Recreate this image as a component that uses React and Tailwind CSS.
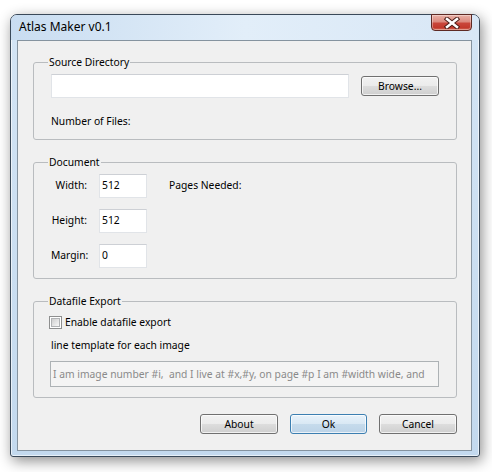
import React from "react";

function WinButton({ children, primary, width }) {
  return (
    <button
      className={
        primary
          ? "h-[20px] rounded-[3px] border border-[#3c7fb1] bg-[linear-gradient(#e8f2fa_0%,#d9e8f4_50%,#c6dbec_50%,#bcd3e7_100%)] shadow-[inset_0_0_0_1px_rgba(255,255,255,0.7)] leading-[16px] text-black"
          : "h-[20px] rounded-[3px] border border-[#707070] bg-[linear-gradient(#f2f2f2_0%,#ebebeb_50%,#dddddd_50%,#cfcfcf_100%)] shadow-[inset_0_0_0_1px_rgba(255,255,255,0.7)] leading-[16px] text-black"
      }
      style={{ width }}
    >
      {children}
    </button>
  );
}

function NumBox({ value }) {
  return (
    <div className="ml-[12px] w-[48px] h-[24px] bg-white border border-[#e1e4e8] border-t-[#cdd0d5] pl-[2px] pt-[2px] leading-[16px]">
      {value}
    </div>
  );
}

function Group({ title, children }) {
  return (
    <fieldset className="border border-[#b9bcbf] rounded-[3px]">
      <legend className="ml-[14px] px-[1px] leading-[15px]">{title}</legend>
      {children}
    </fieldset>
  );
}

export default function App() {
  return (
    <div className="w-[492px] h-[472px] bg-white pl-[10px] pt-[14px] font-['Noto_Sans',sans-serif] text-[10.3px] text-black">
      <div className="w-[470px] h-[443px] rounded-t-[7px] rounded-b-[3px] border border-[#3a4959] bg-gradient-to-b from-[#d4e5f5] to-[#c3d9ee] shadow-[2px_4px_14px_rgba(0,0,0,0.45),inset_0_0_0_1px_rgba(255,255,255,0.6)] flex flex-col">
        <div className="h-[25px] flex items-start rounded-t-[6px] bg-gradient-to-r from-[#c9ddf1] via-[#e2eef9] to-[#d8e7f6]">
          <span className="pl-[8px] pt-[4px] leading-[16px] text-[12px]">Atlas Maker v0.1</span>
          <button className="ml-auto mr-[7px] -mt-[1px] w-[41px] h-[17px] rounded-b-[4px] border border-[#5e2a24] bg-[linear-gradient(#e9b1a7_0%,#dc8a7e_45%,#c9463a_55%,#c2392c_85%,#d9735f_100%)] shadow-[inset_0_0_0_1px_rgba(255,255,255,0.35)] flex items-center justify-center">
            <svg width="16" height="12" viewBox="0 0 16 12">
              <path d="M3 2 L13 10 M13 2 L3 10" stroke="#4b1d17" strokeWidth="4.5" strokeLinecap="square" fill="none" />
              <path d="M3 2 L13 10 M13 2 L3 10" stroke="#ffffff" strokeWidth="2.5" strokeLinecap="square" fill="none" />
            </svg>
          </button>
        </div>

        <div className="ml-[6px] w-[455px] h-[411px] border border-[#85939f] bg-[#f0f0f0] pl-[15px] pr-[14px] pt-[14px]">
          <Group title="Source Directory">
            <div className="pl-[17px] pt-[4px] pb-[10px]">
              <div className="flex items-center">
                <div className="w-[298px] h-[24px] bg-white border border-[#e1e4e8] border-t-[#cdd0d5]" />
                <div className="ml-[12px]">
                  <WinButton width="78px">Browse...</WinButton>
                </div>
              </div>
              <div className="mt-[15px] leading-[16px]">Number of Files:</div>
            </div>
          </Group>

          <div className="mt-[15px]">
            <Group title="Document">
              <div className="pl-[17px] pt-[4px] pb-[10px] flex flex-col gap-[11px]">
                <div className="flex items-center">
                  <span className="w-[36px] text-right">Width:</span>
                  <NumBox value="512" />
                  <span className="ml-[22px]">Pages Needed:</span>
                </div>
                <div className="flex items-center">
                  <span className="w-[36px] text-right">Height:</span>
                  <NumBox value="512" />
                </div>
                <div className="flex items-center">
                  <span className="w-[36px] text-right">Margin:</span>
                  <NumBox value="0" />
                </div>
              </div>
            </Group>
          </div>

          <div className="mt-[15px]">
            <Group title="Datafile Export">
              <div className="pl-[15px] pt-[5px] pb-[10px]">
                <div className="flex items-center gap-[3px] h-[16px]">
                  <div className="w-[13px] h-[13px] border border-[#8e8f8f] bg-white p-[1px]">
                    <div className="w-full h-full border border-[#b1b3b5] bg-gradient-to-br from-[#cfcfcf] to-[#f8f8f8]" />
                  </div>
                  <span className="leading-[16px]">Enable datafile export</span>
                </div>
                <div className="mt-[7px] ml-[2px] leading-[16px]">line template for each image</div>
                <div className="mt-[8px] ml-[1px] w-[389px] h-[26px] border border-[#adb2b5] bg-[#f4f4f4] pl-[2px] pt-[4px] leading-[16px] text-[#8a8a8a] whitespace-nowrap overflow-hidden">
                  I am image number #i,&nbsp; and I live at #x,#y, on page #p I am #width wide, and
                </div>
              </div>
            </Group>
          </div>

          <div className="mt-[16px] flex justify-end gap-[12px]">
            <WinButton width="78px">About</WinButton>
            <WinButton width="77px" primary>Ok</WinButton>
            <WinButton width="78px">Cancel</WinButton>
          </div>
        </div>
      </div>
    </div>
  );
}
